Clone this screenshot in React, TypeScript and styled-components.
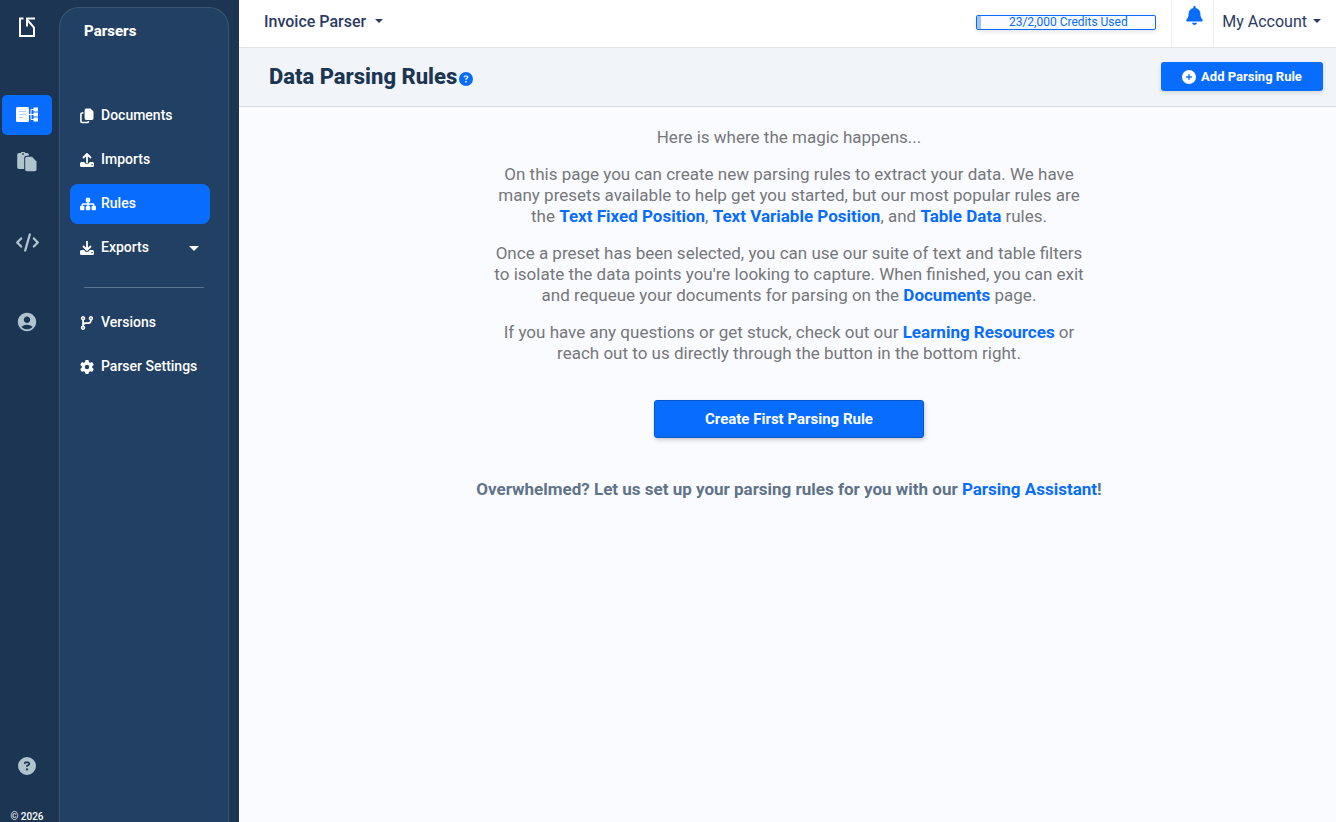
import React from "react";
import styled, { createGlobalStyle, css } from "styled-components";
import {
  FaBell,
  FaCirclePlus,
  FaCircleQuestion,
  FaCode,
  FaCodeBranch,
  FaGear,
  FaSitemap,
} from "react-icons/fa6";
import { MdAccountCircle } from "react-icons/md";

const c = {
  navy: "#1b3553",
  panel: "#224063",
  panelBorder: "#3a5675",
  blue: "#086dff",
  muted: "#b0c4ce",
  ink: "#2b3a62",
};

const GlobalStyle = createGlobalStyle`
  *, *::before, *::after { box-sizing: border-box; }
  body {
    margin: 0;
    background: #fafbff;
    font-family: Roboto, "Liberation Sans", sans-serif;
  }
  h1, h2, p, ul { margin: 0; padding: 0; }
  ul { list-style: none; }
  button { font-family: inherit; cursor: pointer; border: 0; }
  a { text-decoration: none; }
`;

const Shell = styled.div`
  display: flex;
  height: 100vh;
  overflow: hidden;
`;

const Sidebar = styled.aside`
  display: flex;
  flex: none;
  padding: 7px 10px 0 0;
  background: ${c.navy};
`;

const Rail = styled.nav`
  display: flex;
  flex-direction: column;
  align-items: center;
  width: 59px;
  padding-right: 5px;
`;

const Logo = styled.a`
  display: flex;
  margin: 10px 0 58px;
`;

const RailLink = styled.a<{ $active?: boolean; $gap?: number }>`
  display: flex;
  align-items: center;
  justify-content: center;
  flex: none;
  width: 50px;
  height: 40px;
  margin-top: ${(p) => p.$gap ?? 0}px;
  border-radius: 5px;
  color: ${c.muted};
  background: ${(p) => (p.$active ? c.blue : "transparent")};
`;

const RailFoot = styled.div`
  display: flex;
  flex-direction: column;
  align-items: center;
  gap: 26px;
  margin-top: auto;
  color: #fff;
  font-size: 10px;
  font-weight: 500;
  line-height: 10px;
`;

const Panel = styled.nav`
  display: flex;
  flex-direction: column;
  width: 170px;
  padding: 0 10px;
  border: 1px solid ${c.panelBorder};
  border-bottom: 0;
  border-radius: 20px 20px 0 0;
  background: ${c.panel};
`;

const PanelTitle = styled.h2`
  padding: 13px 14px 55px;
  color: #fff;
  font-size: 15px;
  font-weight: 800;
  line-height: 20px;
`;

const PanelList = styled.ul`
  display: flex;
  flex-direction: column;
  gap: 4px;
`;

const navItem = css`
  display: flex;
  align-items: center;
  gap: 5px;
  width: 140px;
  height: 40px;
  padding: 0 10px 2px;
  border-radius: 8px;
  color: #fff;
  font-size: 14px;
  font-weight: 500;
  white-space: nowrap;
`;

const PanelLink = styled.a<{ $active?: boolean }>`
  ${navItem}
  background: ${(p) => (p.$active ? c.blue : "transparent")};
`;

const PanelToggle = styled.button`
  ${navItem}
  background: transparent;
`;

const IconSlot = styled.span`
  display: flex;
  flex: none;
  width: 16px;
  padding-top: 1px;
`;

const Caret = styled.span<{ $size: number; $push?: boolean }>`
  border: ${(p) => p.$size}px solid transparent;
  border-top-color: currentColor;
  border-bottom: 0;
  margin: ${(p) => (p.$push ? "2px 1px 0 auto" : "0")};
`;

const Divider = styled.hr`
  width: 120px;
  margin: 19px 0 15px 14px;
  border: 0;
  border-top: 1px solid #5a7390;
`;

const Main = styled.div`
  display: flex;
  flex-direction: column;
  flex: 1;
  min-width: 0;
`;

const TopBar = styled.header`
  display: flex;
  align-items: flex-start;
  justify-content: space-between;
  height: 48px;
  padding: 0 15px 0 25px;
  border-bottom: 1px solid #e3e5e8;
  background: #fff;
`;

const MenuButton = styled.button<{ $strong?: boolean }>`
  display: flex;
  align-items: center;
  align-self: flex-start;
  gap: ${(p) => (p.$strong ? 9 : 6)}px;
  height: 42px;
  padding: 0;
  background: transparent;
  color: ${c.ink};
  font-size: 16px;
  font-weight: ${(p) => (p.$strong ? 500 : 400)};
`;

const TopRight = styled.div`
  display: flex;
  align-items: center;
  height: 45px;
`;

const Credits = styled.div`
  display: flex;
  width: 180px;
  height: 15px;
  margin-right: 15px;
  border: 1px solid ${c.blue};
  border-radius: 2px;
  background: #fafbff;
  box-shadow: 0 2px 4px rgba(0, 0, 0, 0.1);
  color: ${c.blue};
  font-size: 12px;
  line-height: 13px;
`;

const CreditsFill = styled.span`
  width: 4px;
  background: #9cc5fa;
`;

const CreditsText = styled.span`
  flex: 1;
  text-align: center;
`;

const BellButton = styled.button`
  display: flex;
  justify-content: center;
  width: 43px;
  height: 45px;
  margin-right: 8px;
  padding: 6px 0 0 3px;
  border: solid #eceef0;
  border-width: 0 1px;
  background: transparent;
  color: ${c.blue};
`;

const PageBar = styled.div`
  display: flex;
  align-items: flex-start;
  justify-content: space-between;
  height: 59px;
  padding: 14px 13px 0 30px;
  border-bottom: 1px solid #d9dee5;
  background: #f1f4f9;
`;

const PageTitle = styled.h1`
  display: flex;
  align-items: center;
  gap: 2px;
  color: ${c.navy};
  font-size: 22px;
  font-weight: 800;
  line-height: 30px;
`;

const HelpLink = styled.a`
  display: flex;
  padding-top: 4px;
  color: ${c.blue};
`;

const AddButton = styled.button`
  display: flex;
  align-items: center;
  justify-content: center;
  gap: 5px;
  width: 162px;
  height: 29px;
  border-radius: 3px;
  background: ${c.blue};
  box-shadow: 0 2px 4px rgba(0, 0, 0, 0.12);
  color: #fff;
  font-size: 13px;
  font-weight: 700;
`;

const Content = styled.main`
  display: flex;
  flex-direction: column;
  align-items: center;
  padding: 20px 21px 20px 24px;
  color: #75777b;
  font-size: 17px;
  line-height: 21px;
  text-align: center;

  a {
    color: ${c.blue};
    font-weight: 700;
  }
`;

const Copy = styled.div`
  display: flex;
  flex-direction: column;
  gap: 16px;
  max-width: 600px;
`;

const CreateButton = styled.button`
  width: 270px;
  height: 38px;
  margin: 36px 0 41px;
  border: 1px solid #0757cc;
  border-radius: 3px;
  background: ${c.blue};
  box-shadow: 1px 2px 4px rgba(0, 0, 0, 0.2);
  color: #fff;
  font-size: 15px;
  font-weight: 700;
`;

const Overwhelmed = styled.p`
  color: #5f7488;
  font-weight: 700;
`;

function LogoMark() {
  return (
    <svg width="16" height="20" viewBox="0 0 16 20" fill="none" stroke="#fff" strokeWidth="2">
      <path d="M4.500 1.500H1V19H15V10.500L8.500 3" />
      <path d="M16 1.500H8V9.500" />
    </svg>
  );
}

function ParserIcon() {
  return (
    <svg width="22" height="16" viewBox="0 0 22 16">
      <rect width="13" height="15" rx="1.500" fill="#fff" />
      <path d="M3 4.500h7M3 7.500h7M3 10.500h4" stroke="#a9cbff" />
      <path d="M13 7.500h5M18 2.500h-3v10h3" fill="none" stroke="#fff" />
      <path d="M17.500 0.500H22v4h-4.500zM17.500 5.500H22v4h-4.500zM17.500 10.500H22v4h-4.500z" fill="#fff" />
    </svg>
  );
}

function ClipboardIcon() {
  return (
    <svg width="20" height="20" viewBox="0 0 20 20" fill="currentColor">
      <path
        fillRule="evenodd"
        d="M2 1H3.800A2.300 2.300 0 0 1 8.200 1H10A1.800 1.800 0 0 1 11.600 3.700H9.500A2.300 2.300 0 0 0 7.200 6V17H2A1.800 1.800 0 0 1 .2 15.200V2.800A1.800 1.800 0 0 1 2 1ZM6 1A.9 .9 0 1 0 6 2.800A.9 .9 0 1 0 6 1Z"
      />
      <path d="M10 4.800H15L19.500 9.500V17.500A1.800 1.800 0 0 1 17.700 19.300H10A1.800 1.800 0 0 1 8.200 17.500V6.600A1.800 1.800 0 0 1 10 4.800Z" />
    </svg>
  );
}

function DocumentsIcon() {
  return (
    <svg width="14" height="16" viewBox="0 0 14 16">
      <path
        d="M3.500 5H2A1.200 1.200 0 0 0 .9 6.200V13.300A1.200 1.200 0 0 0 2.100 14.500H7.300A1.200 1.200 0 0 0 8.500 13.300V13"
        fill="none"
        stroke="#fff"
        strokeWidth="1.600"
      />
      <path d="M6.300 .5H10.500L13.500 3.500V10.200A1.700 1.700 0 0 1 11.800 11.900H6.300A1.700 1.700 0 0 1 4.600 10.200V2.200A1.700 1.700 0 0 1 6.300 .5Z" fill="#fff" />
    </svg>
  );
}

function TrayIcon({ down }: { down?: boolean }) {
  return (
    <svg width="14" height="14" viewBox="0 0 14 14">
      <path
        d={down ? "M7 0v8.500M3.500 5.500L7 9l3.500-3.500" : "M7 9.500V1M3.500 4.500L7 1l3.500 3.500"}
        fill="none"
        stroke="#fff"
        strokeWidth="1.800"
        strokeLinecap="round"
        strokeLinejoin="round"
      />
      <path
        fillRule="evenodd"
        d="M1.500 9H4.300C4.800 10.300 5.800 11 7 11S9.200 10.300 9.700 9H12.500A1.500 1.500 0 0 1 14 10.500V12.500A1.500 1.500 0 0 1 12.500 14H1.500A1.500 1.500 0 0 1 0 12.500V10.500A1.500 1.500 0 0 1 1.500 9ZM11.500 11V12.200H12.700V11Z"
        fill="#fff"
      />
    </svg>
  );
}

export default function App() {
  return (
    <>
      <GlobalStyle />
      <Shell>
        <Sidebar>
          <Rail aria-label="Sections">
            <Logo href="#" aria-label="Home"><LogoMark /></Logo>
            <RailLink href="#" aria-label="Parsers" $active><ParserIcon /></RailLink>
            <RailLink href="#" aria-label="Templates" $gap={7}><ClipboardIcon /></RailLink>
            <RailLink href="#" aria-label="API" $gap={40}><FaCode size={23} /></RailLink>
            <RailLink href="#" aria-label="Account" $gap={40}><MdAccountCircle size={22} /></RailLink>
            <RailFoot>
              <RailLink href="#" aria-label="Help"><FaCircleQuestion size={18} /></RailLink>
              <span>© 2026</span>
            </RailFoot>
          </Rail>
          <Panel aria-label="Parser">
            <PanelTitle>Parsers</PanelTitle>
            <PanelList>
              <li><PanelLink href="#"><IconSlot><DocumentsIcon /></IconSlot>Documents</PanelLink></li>
              <li><PanelLink href="#"><IconSlot><TrayIcon /></IconSlot>Imports</PanelLink></li>
              <li><PanelLink href="#" $active><IconSlot><FaSitemap size={16} /></IconSlot>Rules</PanelLink></li>
              <li><PanelToggle><IconSlot><TrayIcon down /></IconSlot>Exports<Caret $size={5} $push /></PanelToggle></li>
            </PanelList>
            <Divider />
            <PanelList>
              <li><PanelLink href="#"><IconSlot><FaCodeBranch size={14} /></IconSlot>Versions</PanelLink></li>
              <li><PanelLink href="#"><IconSlot><FaGear size={14} /></IconSlot>Parser Settings</PanelLink></li>
            </PanelList>
          </Panel>
        </Sidebar>
        <Main>
          <TopBar>
            <MenuButton $strong>Invoice Parser<Caret $size={4} /></MenuButton>
            <TopRight>
              <Credits>
                <CreditsFill />
                <CreditsText>23/2,000 Credits Used</CreditsText>
              </Credits>
              <BellButton aria-label="Notifications"><FaBell size={19} /></BellButton>
              <MenuButton>My Account<Caret $size={4} /></MenuButton>
            </TopRight>
          </TopBar>
          <PageBar>
            <PageTitle>
              Data Parsing Rules
              <HelpLink href="#" aria-label="Help"><FaCircleQuestion size={14} /></HelpLink>
            </PageTitle>
            <AddButton><FaCirclePlus size={14} />Add Parsing Rule</AddButton>
          </PageBar>
          <Content>
            <Copy>
              <p>Here is where the magic happens...</p>
              <p>
                On this page you can create new parsing rules to extract your data. We have many presets
                available to help get you started, but our most popular rules are the{" "}
                <a href="#">Text Fixed Position</a>, <a href="#">Text Variable Position</a>, and{" "}
                <a href="#">Table Data</a> rules.
              </p>
              <p>
                Once a preset has been selected, you can use our suite of text and table filters to isolate
                the data points you're looking to capture. When finished, you can exit and requeue your
                documents for parsing on the <a href="#">Documents</a> page.
              </p>
              <p>
                If you have any questions or get stuck, check out our <a href="#">Learning Resources</a> or
                reach out to us directly through the button in the bottom right.
              </p>
            </Copy>
            <CreateButton>Create First Parsing Rule</CreateButton>
            <Overwhelmed>
              Overwhelmed? Let us set up your parsing rules for you with our <a href="#">Parsing Assistant</a>!
            </Overwhelmed>
          </Content>
        </Main>
      </Shell>
    </>
  );
}
